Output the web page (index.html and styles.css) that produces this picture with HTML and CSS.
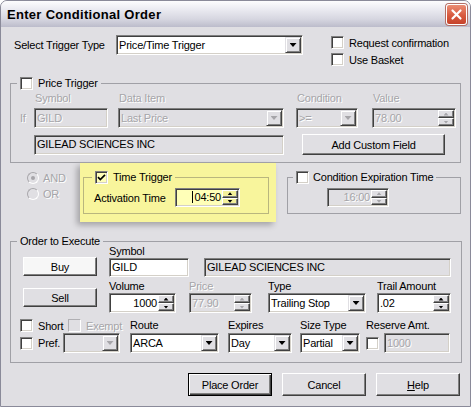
FILE: index.html
```html
<!DOCTYPE html>
<html>
  <head>
    <meta charset="utf-8">
    <title>Enter Conditional Order</title>
    <link rel="stylesheet" href="styles.css">
  </head>
  <body>
    <div class="window">
      <div class="titlebar">
        <span class="title">Enter Conditional Order</span>
        <span class="close">
          <svg width="13" height="13" viewBox="0 0 13 13"><path d="M2.5 2.5L10.5 10.5M10.5 2.5L2.5 10.5" stroke="#fff" stroke-width="2.2" stroke-linecap="round"/></svg>
        </span>
      </div>

      <div class="client">
        <div class="top-row">
          <span class="top-label">Select Trigger Type</span>
          <div class="field combo w-trigger"><span class="val">Price/Time Trigger</span><span class="drop"></span></div>
          <div class="opts">
            <div class="chk"><span class="cb"></span>Request confirmation</div>
            <div class="chk"><span class="cb"></span>Use Basket</div>
          </div>
        </div>

        <!-- price trigger -->
        <div class="group price-group">
          <div class="legend"><span class="cb"></span>Price Trigger</div>
          <div class="price-grid">
            <span></span>
            <span class="lbl off">Symbol</span>
            <span class="lbl off">Data Item</span>
            <span class="lbl off">Condition</span>
            <span class="lbl off">Value</span>
            <span class="if off">If</span>
            <div class="field off w-psym"><span class="val">GILD</span></div>
            <div class="field off w-item"><span class="val">Last Price</span><span class="drop"></span></div>
            <div class="field off w-cond"><span class="val">&gt;=</span><span class="drop"></span></div>
            <div class="field off w-value"><span class="val">78.00</span><span class="spin"><span class="up"></span><span class="dn"></span></span></div>
          </div>
          <div class="price-row2">
            <div class="field ro w-pdesc"><span class="val">GILEAD SCIENCES INC</span></div>
            <div class="btn w-custom">Add Custom Field</div>
          </div>
        </div>

        <!-- and/or + time triggers -->
        <div class="mid">
          <div class="radios">
            <div class="radio-row off"><span class="radio on"></span>AND</div>
            <div class="radio-row off"><span class="radio"></span>OR</div>
          </div>
          <div class="hl">
            <div class="group time-group">
              <div class="legend">
                <span class="cb">
                  <svg width="9" height="9" viewBox="0 0 9 9"><path d="M1 4.2L3.3 6.6L8 1.8" stroke="#000" stroke-width="1.7" fill="none"/></svg>
                </span>Time Trigger
              </div>
              <div class="time-row">
                <span class="time-label">Activation Time</span>
                <div class="field sm w-time"><span class="val r"><i class="caret"></i>04:50</span><span class="spin"><span class="up"></span><span class="dn"></span></span></div>
              </div>
            </div>
          </div>
          <div class="group cond-group">
            <div class="legend tight"><span class="cb"></span>Condition Expiration Time</div>
            <div class="cond-row">
              <div class="field sm off w-exp"><span class="val r">16:00</span><span class="spin"><span class="up"></span><span class="dn"></span></span></div>
            </div>
          </div>
        </div>

        <!-- order -->
        <div class="group order-group">
          <div class="legend">Order to Execute</div>
          <div class="order-top">
            <div class="bs-col">
              <div class="btn buy">Buy</div>
              <div class="btn sell">Sell</div>
            </div>
            <div class="order-right">
              <div class="o-grid1">
                <span class="lbl">Symbol</span>
                <span></span>
                <div class="field sm w-osym"><span class="val">GILD</span></div>
                <div class="field sm ro w-odesc"><span class="val">GILEAD SCIENCES INC</span></div>
              </div>
              <div class="o-grid2">
                <span class="lbl">Volume</span>
                <span class="lbl off">Price</span>
                <span class="lbl">Type</span>
                <span class="lbl">Trail Amount</span>
                <div class="field w-vol"><span class="val r">1000</span><span class="spin"><span class="up"></span><span class="dn"></span></span></div>
                <div class="field off w-price"><span class="val">77.90</span><span class="spin"><span class="up"></span><span class="dn"></span></span></div>
                <div class="field w-type"><span class="val">Trailing Stop</span><span class="drop"></span></div>
                <div class="field w-trail"><span class="val">.02</span><span class="spin"><span class="up"></span><span class="dn"></span></span></div>
              </div>
            </div>
          </div>
          <div class="o-row3">
            <div class="chk w-short"><span class="cb"></span>Short</div>
            <div class="chk w-exempt off"><span class="cb dis"></span>Exempt</div>
            <span class="lbl w-l-route">Route</span>
            <span class="lbl w-l-exp">Expires</span>
            <span class="lbl w-l-size">Size Type</span>
            <span class="lbl">Reserve Amt.</span>
          </div>
          <div class="o-row4">
            <div class="chk w-pref"><span class="cb"></span>Pref.</div>
            <div class="field off w-prefsel"><span class="val"></span><span class="drop"></span></div>
            <div class="field w-route"><span class="val">ARCA</span><span class="drop"></span></div>
            <div class="field w-expires"><span class="val">Day</span><span class="drop"></span></div>
            <div class="field w-size"><span class="val">Partial</span><span class="drop"></span></div>
            <span class="cb reserve-cb"></span>
            <div class="field off w-reserve"><span class="val">1000</span></div>
          </div>
        </div>

        <div class="actions">
          <div class="btn big default">Place Order</div>
          <div class="btn big">Cancel</div>
          <div class="btn big"><span><u>H</u>elp</span></div>
        </div>
      </div>
    </div>
  </body>
</html>
```

FILE: styles.css
```css
* {
    box-sizing: border-box;
}

body {
    margin: 0;
    font-family: "Liberation Sans", Arial, sans-serif;
    font-size: 11px;
    letter-spacing: -0.2px;
    color: #000;
    background: #fff;
}

.window {
    width: 471px;
    height: 407px;
    border: 1px solid #8a8a99;
    border-radius: 7px 7px 0 0;
    background: #e0dfe3;
    overflow: hidden;
}

/* title bar */
.titlebar {
    height: 26px;
    display: flex;
    align-items: center;
    justify-content: space-between;
    padding: 0 3px 0 6px;
    background: linear-gradient(#fdfdfe, #ececf2 30%, #d6d6e0 70%, #bcbccb);
}

.title {
    font-size: 13px;
    font-weight: bold;
    letter-spacing: 0.3px;
}

.close {
    width: 21px;
    height: 21px;
    display: flex;
    align-items: center;
    justify-content: center;
    border: 1px solid #fff;
    border-radius: 3px;
    background: linear-gradient(#ea8d74, #d85a3f 55%, #c6432b);
    box-shadow: 0 0 0 1px #b36f66;
}

.client {
    padding-top: 8px;
}

/* common controls */
.off {
    color: #a6a5a9;
    text-shadow: 1px 1px 0 #fff;
}

.lbl {
    line-height: 13px;
    white-space: nowrap;
}

.cb {
    width: 13px;
    height: 13px;
    flex: none;
    display: flex;
    align-items: center;
    justify-content: center;
    background: #fff;
    border: 1px solid;
    border-color: #808080 #fff #fff #808080;
    box-shadow: inset 1px 1px 0 #404040, inset -1px -1px 0 #d4d0c8;
}

.cb.dis {
    background: #e0dfe3;
    border-color: #b0afb3 #fff #fff #b0afb3;
    box-shadow: none;
}

.chk {
    display: flex;
    align-items: center;
    gap: 5px;
    white-space: nowrap;
}

.field {
    height: 20px;
    display: flex;
    padding: 1px;
    background: #fff;
    border: 1px solid;
    border-color: #808080 #fff #fff #808080;
    box-shadow: inset 1px 1px 0 #404040, inset -1px -1px 0 #d4d0c8;
}

.field.sm {
    height: 19px;
}

.field.ro, .field.off {
    background: #e0dfe3;
}

.val {
    flex: 1;
    align-self: center;
    padding-left: 1px;
    line-height: 13px;
    white-space: nowrap;
    overflow: hidden;
}

.val.r {
    text-align: right;
    padding-right: 1px;
}

.drop {
    width: 16px;
    flex: none;
    display: flex;
    align-items: center;
    justify-content: center;
    background: #e0dfe3;
    border: 1px solid;
    border-color: #e0dfe3 #404040 #404040 #e0dfe3;
    box-shadow: inset 1px 1px 0 #fff, inset -1px -1px 0 #808080;
}

.drop::after {
    content: "";
    width: 7px;
    height: 4px;
    background: #000;
    clip-path: polygon(0 0, 100% 0, 50% 100%);
}

.spin {
    width: 16px;
    flex: none;
    display: flex;
    flex-direction: column;
}

.spin span {
    flex: 1;
    display: flex;
    align-items: center;
    justify-content: center;
    background: #e0dfe3;
    border: 1px solid;
    border-color: #fff #404040 #404040 #fff;
    box-shadow: inset -1px -1px 0 #808080;
}

.spin span::after {
    content: "";
    width: 5px;
    height: 3px;
    background: #000;
}

.spin .up::after {
    clip-path: polygon(50% 0, 100% 100%, 0 100%);
}

.spin .dn::after {
    clip-path: polygon(0 0, 100% 0, 50% 100%);
}

.off .drop::after, .off .spin span::after {
    background: #a6a5a9;
}

.btn {
    display: flex;
    align-items: center;
    justify-content: center;
    white-space: nowrap;
    background: #e0dfe3;
    border: 1px solid;
    border-color: #fff #404040 #404040 #fff;
    box-shadow: inset -1px -1px 0 #808080;
}

.btn.default {
    border-color: #000;
    box-shadow: inset 1px 1px 0 #fff, inset -1px -1px 0 #404040, inset -2px -2px 0 #808080;
}

/* group boxes */
.group {
    position: relative;
    margin-left: 9px;
    border: 1px solid #a0a0a6;
}

.legend {
    position: absolute;
    top: -7px;
    left: 6px;
    height: 13px;
    display: flex;
    align-items: center;
    gap: 5px;
    padding: 0 3px;
    line-height: 13px;
    white-space: nowrap;
    background: #e0dfe3;
}

/* top row */
.top-row {
    display: flex;
    align-items: flex-start;
    padding-left: 13px;
}

.top-label {
    width: 102px;
    line-height: 20px;
}

.w-trigger { width: 187px; }

.opts {
    margin-left: 28px;
    margin-top: -1px;
}

.opts .chk {
    height: 17px;
}

/* price trigger */
.price-group {
    width: 451px;
    margin-top: 15px;
    padding: 8px 0 7px;
}

.price-grid {
    display: grid;
    grid-template-columns: 23px 84px 178px 76px 84px;
    grid-template-rows: 13px 20px;
    row-gap: 3px;
}

.price-grid .lbl { padding-left: 1px; }

.if {
    line-height: 20px;
    padding-left: 9px;
}

.w-psym { width: 74px; }
.w-item { width: 166px; }
.w-cond { width: 62px; }
.w-value { width: 84px; }

.price-row2 {
    display: flex;
    align-items: center;
    margin-top: 6px;
    padding-left: 23px;
}

.w-pdesc { width: 250px; }

.w-custom {
    width: 143px;
    height: 21px;
    margin-left: 18px;
}

/* and / or + time */
.mid {
    display: flex;
    align-items: flex-start;
}

.radios {
    width: 79px;
    margin-top: 7px;
    padding-left: 26px;
}

.radio-row {
    display: flex;
    align-items: center;
    gap: 4px;
    height: 16px;
}

.radio {
    width: 12px;
    height: 12px;
    display: flex;
    align-items: center;
    justify-content: center;
    border-radius: 50%;
    border: 1px solid;
    border-color: #a8a7ab #fff #fff #a8a7ab;
    background: #e0dfe3;
}

.radio.on::after {
    content: "";
    width: 4px;
    height: 4px;
    border-radius: 50%;
    background: #a6a5a9;
}

.hl {
    width: 196px;
    padding: 14px 7px 8px 3px;
    background: #f8f59c;
    box-shadow: -3px 3px 6px rgba(0, 0, 0, 0.28);
}

.hl .legend { background: #f8f59c; }
.hl .group { border-color: #b9b67e; }
.hl .field, .hl .cb { background: #ffffb8; }
.hl .spin span { background: #f3f09a; }

.time-group {
    width: 186px;
    margin-left: 0;
    padding: 10px 0 6px;
}

.time-group .legend { left: 8px; }

.time-row {
    display: flex;
    align-items: center;
    padding-left: 10px;
}

.time-label { width: 81px; }
.w-time { width: 65px; }

.caret {
    display: inline-block;
    width: 1px;
    height: 12px;
    margin-right: 1px;
    vertical-align: -2px;
    background: #000;
}

.cond-group {
    width: 174px;
    margin: 14px 0 0 11px;
    padding: 10px 0 6px;
}

.cond-group .legend {
    left: 5px;
    gap: 4px;
}

.cond-row { padding-left: 39px; }
.w-exp { width: 62px; }

/* order to execute */
.order-group {
    width: 452px;
    margin-top: 19px;
    padding-bottom: 9px;
}

.order-top {
    display: flex;
    padding-left: 12px;
}

.bs-col {
    width: 74px;
    display: flex;
    flex-direction: column;
    gap: 12px;
    padding-top: 15px;
}

.bs-col .btn { height: 19px; }
.buy { background: #f7f7f7; }

.order-right {
    margin-left: 12px;
    padding-top: 3px;
}

.o-grid1 {
    display: grid;
    grid-template-columns: 95px 247px;
    grid-template-rows: 13px 19px;
}

.o-grid2 {
    display: grid;
    grid-template-columns: 80px 79px 109px 74px;
    grid-template-rows: 13px 20px;
    margin-top: 3px;
}

.w-osym { width: 80px; }
.w-odesc { width: 247px; }
.w-vol { width: 67px; }
.w-price { width: 63px; }
.w-type { width: 98px; }
.w-trail { width: 74px; }

.o-row3 {
    display: flex;
    align-items: center;
    height: 13px;
    margin-top: 6px;
    padding-left: 9px;
}

.w-short { width: 48px; }
.w-exempt { width: 62px; }
.w-l-route { width: 98px; }
.w-l-exp { width: 72px; }
.w-l-size { width: 66px; }

.o-row4 {
    display: flex;
    align-items: center;
    height: 20px;
    margin-top: 1px;
    padding-left: 9px;
}

.w-pref { width: 43px; }
.w-prefsel { width: 57px; }
.w-route { width: 89px; margin-left: 10px; }
.w-expires { width: 64px; margin-left: 9px; }
.w-size { width: 60px; margin-left: 8px; }
.reserve-cb { margin-left: 6px; }
.w-reserve { width: 66px; margin-left: 5px; }

/* bottom buttons */
.actions {
    display: flex;
    gap: 10px;
    margin-top: 10px;
    padding-left: 187px;
}

.btn.big {
    width: 84px;
    height: 23px;
}
```
